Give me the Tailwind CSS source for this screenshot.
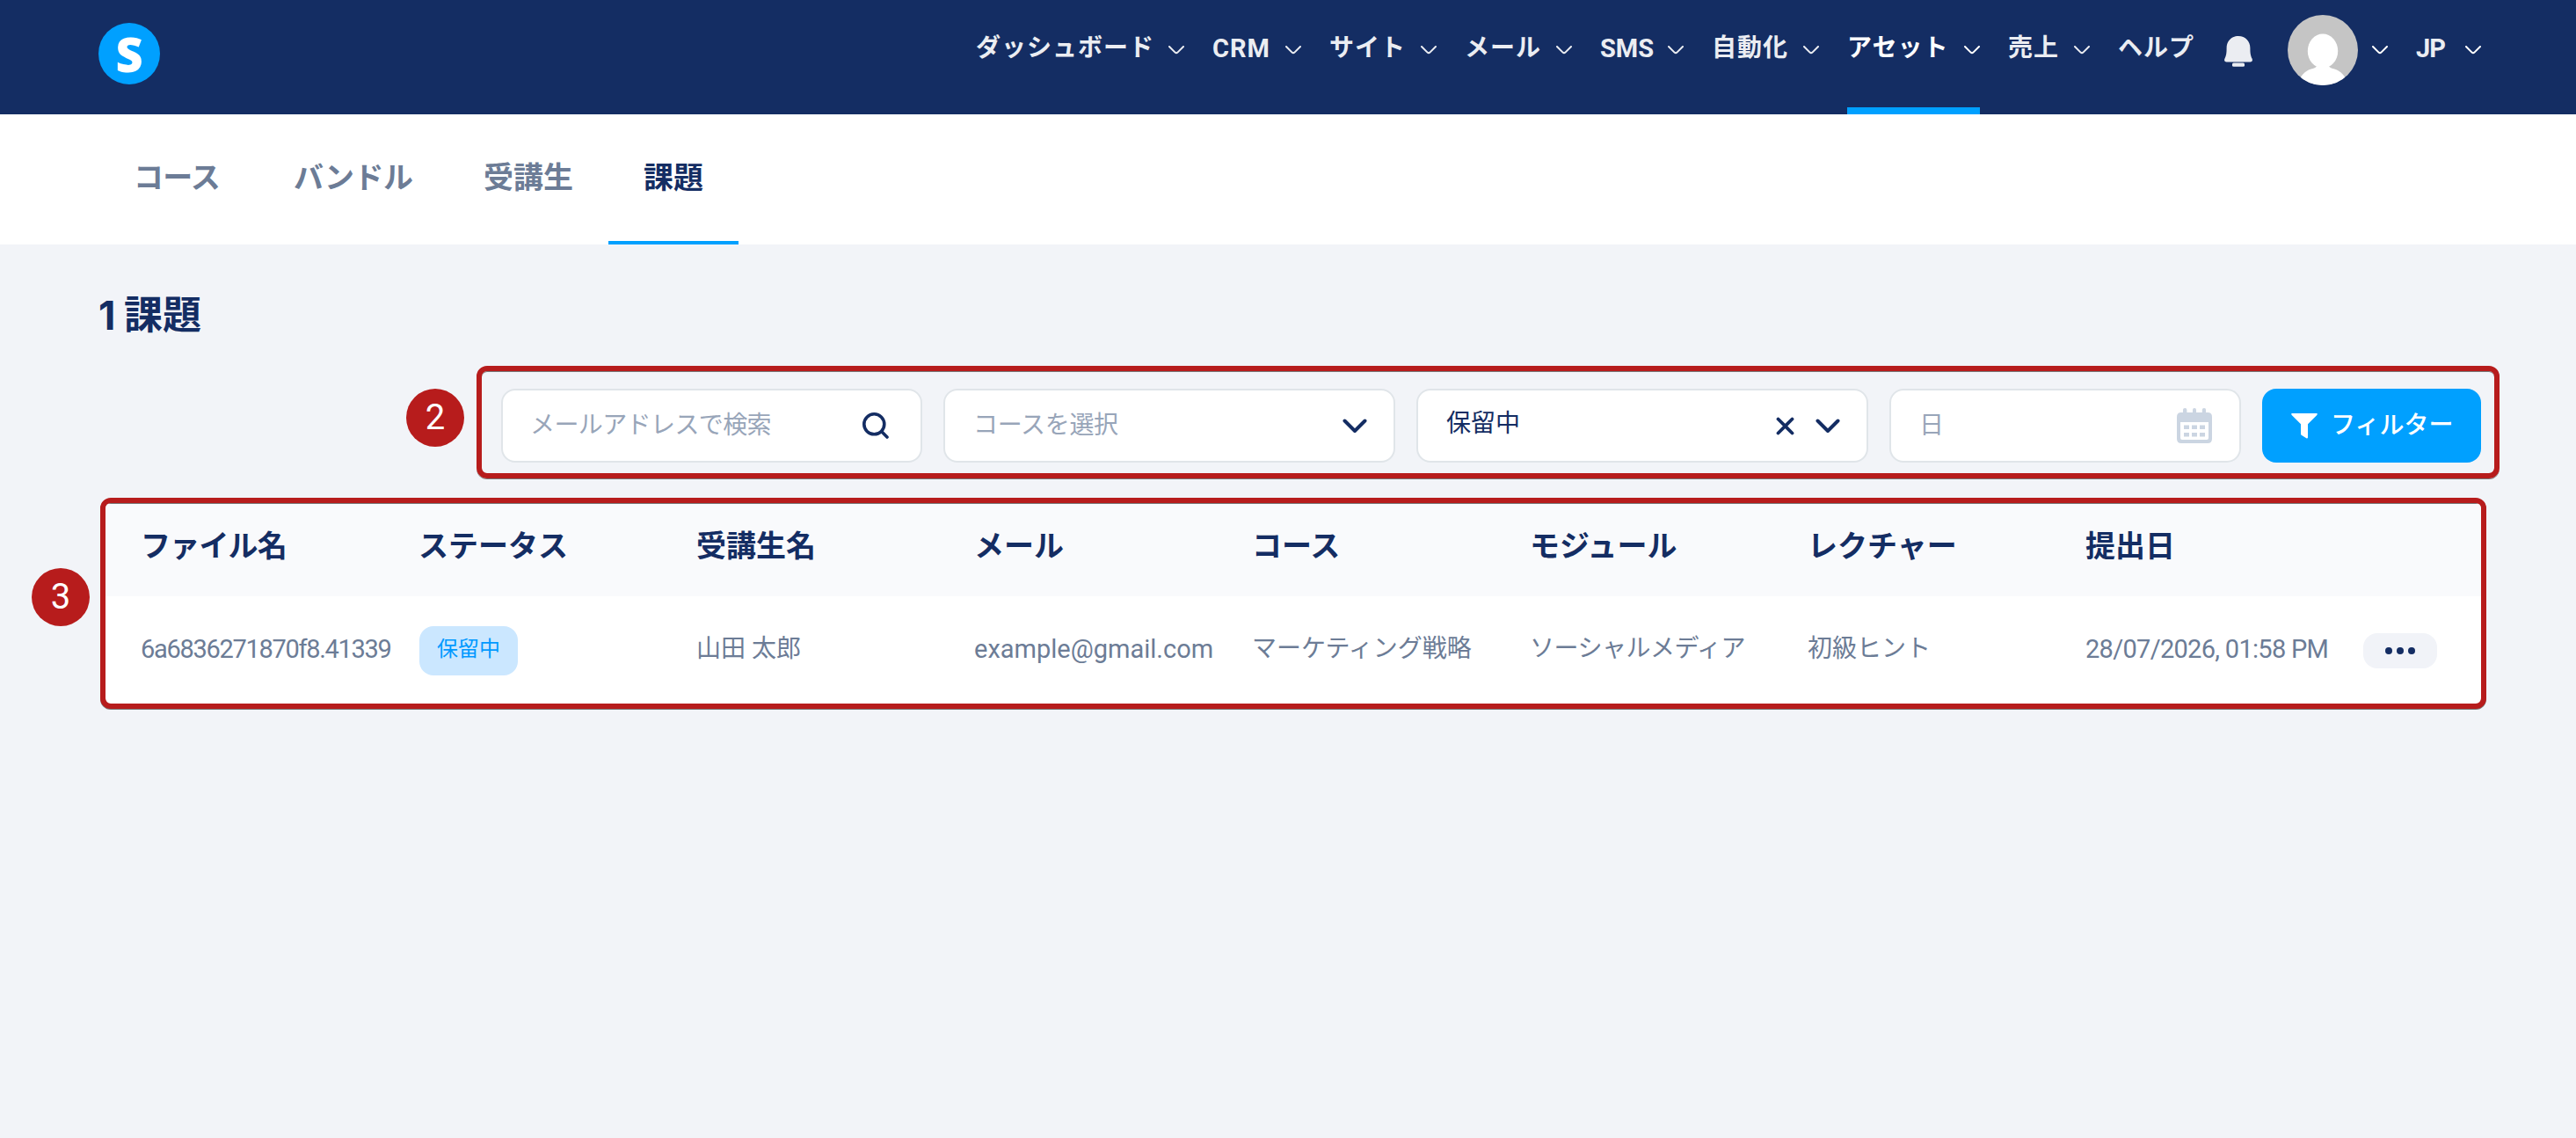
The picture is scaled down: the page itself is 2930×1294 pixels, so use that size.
<!DOCTYPE html>
<html lang="ja">
<head>
    <meta charset="UTF-8">
    <meta name="viewport" content="width=device-width, initial-scale=1.0">
    <title>課題</title>
    <script src="https://cdn.jsdelivr.net/npm/@tailwindcss/browser@4"></script>
</head>
<body class="min-h-screen bg-[#f2f4f8] font-['Roboto','Noto_Sans_CJK_JP',sans-serif] text-[#142d63]">
    <!-- Shared icons -->
    <svg class="hidden">
        <symbol id="chevron" viewBox="0 0 18 10"><path d="M1 1l6.6 6.6q1.4 1.3 2.8 0L17 1" fill="none" stroke="currentColor" stroke-width="2" stroke-linecap="round"/></symbol>
        <symbol id="chevron-bold" viewBox="0 0 28 17"><path d="M2.5 2.5L14 14L25.5 2.5" fill="none" stroke="currentColor" stroke-width="4" stroke-linecap="round" stroke-linejoin="round"/></symbol>
    </svg>

    <!-- Top bar -->
    <header class="flex h-[130px] justify-between bg-[#142d63] pl-28 pr-[108px]">
        <a href="#" class="mt-[26px] flex size-[70px] items-center justify-center rounded-full bg-[#00a0ff]">
            <span class="font-['Open_Sans'] text-[54px] leading-[70px] font-extrabold text-white">S</span>
        </a>
        <nav class="flex text-[28px] font-bold whitespace-nowrap text-[#ebedf2]">
            <div class="flex gap-8 leading-[110px] tracking-[1px]">
                <a href="#" class="flex w-[237px] justify-between">ダッシュボード<svg class="mt-[52px] h-2.5 w-[18px]"><use href="#chevron"/></svg></a>
                <a href="#" class="flex w-[101px] justify-between text-[29px]">CRM<svg class="mt-[52px] h-2.5 w-[18px]"><use href="#chevron"/></svg></a>
                <a href="#" class="flex w-[122px] justify-between">サイト<svg class="mt-[52px] h-2.5 w-[18px]"><use href="#chevron"/></svg></a>
                <a href="#" class="flex w-[122px] justify-between">メール<svg class="mt-[52px] h-2.5 w-[18px]"><use href="#chevron"/></svg></a>
                <a href="#" class="flex w-[95px] justify-between text-[29px] tracking-normal">SMS<svg class="mt-[52px] h-2.5 w-[18px]"><use href="#chevron"/></svg></a>
                <a href="#" class="flex w-[122px] justify-between">自動化<svg class="mt-[52px] h-2.5 w-[18px]"><use href="#chevron"/></svg></a>
                <a href="#" class="flex w-[151px] justify-between border-b-8 border-[#00a0ff] text-white">アセット<svg class="mt-[52px] h-2.5 w-[18px]"><use href="#chevron"/></svg></a>
                <a href="#" class="flex w-[93px] justify-between">売上<svg class="mt-[52px] h-2.5 w-[18px]"><use href="#chevron"/></svg></a>
                <a href="#" class="w-[87px]">ヘルプ</a>
            </div>
            <svg class="mt-[41px] ml-[34px] h-[35px] w-8" viewBox="0 0 32 35" fill="currentColor">
                <path d="M16 0C8 0 2.6 6 2.6 13.500C2.600 20 2 22.500 .5 25.500C-.6 28 .5 29.500 2.500 29.500H29.500C31.500 29.500 32.600 28 31.500 25.500C30 22.500 29.400 20 29.400 13.500C29.400 6 24 0 16 0Z"/>
                <rect x="9" y="30.600" width="14" height="4.200" rx="1.500"/>
            </svg>
            <svg class="mt-[17px] ml-10 size-20 rounded-full bg-[#c5c5c5]" viewBox="0 0 80 80" fill="#fff">
                <ellipse cx="40" cy="41" rx="17.200" ry="19.500"/>
                <path d="M33 56V58.500C31 61 27 61 23 63C18 65.500 15 70 13 74V80H67V74C65 70 62 65.500 57 63C53 61 49 61 47 58.500V56Z"/>
            </svg>
            <svg class="mt-[52px] ml-4 h-2.5 w-[18px] text-white"><use href="#chevron"/></svg>
            <a href="#" class="ml-8 flex w-[74px] justify-between text-[29px] leading-[110px] tracking-[-1px]">JP<svg class="mt-[52px] h-2.5 w-[18px] text-white"><use href="#chevron"/></svg></a>
        </nav>
    </header>

    <!-- Sub navigation -->
    <nav class="flex h-[148px] bg-white pl-28 text-[34px] leading-[144px] font-bold text-[#6c7c96]">
        <a href="#" class="w-[182px] pl-10 tracking-[-0.8px]">コース</a>
        <a href="#" class="w-[216px] pl-10 tracking-[-0.6px]">バンドル</a>
        <a href="#" class="w-[182px] pl-10">受講生</a>
        <a href="#" class="border-b-4 border-[#00a0ff] px-10 text-[#142d63]">課題</a>
    </nav>

    <main>
        <h1 class="flex pt-12 pl-28 text-[44px] leading-[66px] font-bold"><span class="w-[29px] font-['Inter'] text-[45px]">1</span><span>課題</span></h1>

        <!-- Filters -->
        <div class="mt-6 ml-[462px] flex items-start">
            <span class="mt-[26px] flex size-[66px] items-center justify-center rounded-full bg-[#b71c1c] text-[40px] leading-none text-white">2</span>
            <form class="ml-3.5 flex h-32 w-[2301px] gap-6 rounded-xl border-6 border-[#b71c1c] pt-5 pl-[22px] text-[28px] shadow-[0_1px_0_#777,inset_0_1px_0_#777]">
                <div class="flex h-[84px] w-[479px] shrink-0 items-center justify-between rounded-2xl border-2 border-[#e0e5e9] bg-white pr-9 pl-[31px] text-[#98a5b9]">
                    <span class="-mt-px tracking-[-0.6px]">メールアドレスで検索</span>
                    <svg class="size-[30px] text-[#142d63]" viewBox="0 0 30 30" fill="none" stroke="currentColor" stroke-width="3.6" stroke-linecap="round"><circle cx="13.300" cy="13.300" r="11.500"/><path d="M21.800 21.800L28 28"/></svg>
                </div>
                <div class="flex h-[84px] w-[514px] shrink-0 items-center justify-between rounded-2xl border-2 border-[#e0e5e9] bg-white pr-[30px] pl-8 text-[#98a5b9]">
                    <span class="-mt-px tracking-[-0.3px]">コースを選択</span>
                    <svg class="h-[17px] w-7 text-[#142d63]"><use href="#chevron-bold"/></svg>
                </div>
                <div class="flex h-[84px] w-[514px] shrink-0 items-center rounded-2xl border-2 border-[#e0e5e9] bg-white pr-[30px] pl-8">
                    <span class="-mt-1 flex-1">保留中</span>
                    <svg class="mr-6 size-[21px]" viewBox="0 0 21 21" fill="none" stroke="currentColor" stroke-width="3.8" stroke-linecap="round"><path d="M2.500 2.500L18.500 18.500M18.500 2.500L2.500 18.500"/></svg>
                    <svg class="h-[17px] w-7"><use href="#chevron-bold"/></svg>
                </div>
                <div class="flex h-[84px] w-[400px] shrink-0 items-center justify-between rounded-2xl border-2 border-[#e0e5e9] bg-white pr-[31px] pl-8 text-[#98a5b9]">
                    <span class="-mt-px">日</span>
                    <svg class="size-10 text-[#cbd5e2]" viewBox="0 0 40 40" fill="currentColor">
                        <path fill-rule="evenodd" d="M5 5H7V2Q7 0 9.200 0T11.400 2V5H18V2Q18 0 20 0T22 2V5H28.800V2Q28.800 0 31 0T33 2V5H35Q40 5 40 10V35Q40 40 35 40H5Q0 40 0 35V10Q0 5 5 5ZM4 16V34Q4 36 6 36H34Q36 36 36 34V16Z"/>
                        <path d="M8 19.500h6v4.500H8zM17 19.500h6v4.500h-6zM26 19.500h6v4.500h-6zM8 28h6v4.500H8zM17 28h6v4.500h-6zM26 28h6v4.500h-6z"/>
                    </svg>
                </div>
                <button type="button" class="flex h-[84px] w-[249px] shrink-0 items-center rounded-2xl bg-[#00a0ff] pl-[33px] font-medium text-white">
                    <svg class="mr-[15px] h-[30px] w-[30px]" viewBox="0 0 30 30" fill="currentColor"><path d="M1 1H29Q30.500 1.500 29.300 3L19 13.300V28.500Q18.600 30 17.300 29.300L11.700 25.700Q11 25.200 11 24.500V13.300L.7 3Q-.5 1.500 1 1Z"/></svg>
                    <span class="-mt-px">フィルター</span>
                </button>
            </form>
        </div>

        <!-- Assignments table -->
        <div class="mt-[22px] ml-9 flex items-start">
            <span class="mt-20 flex size-[66px] items-center justify-center rounded-full bg-[#b71c1c] text-[40px] leading-none text-white">3</span>
            <div class="ml-3 h-60 w-[2714px] overflow-hidden rounded-xl border-6 border-[#b71c1c] bg-white whitespace-nowrap shadow-[0_1px_0_#777,inset_0_1px_0_#777]">
                <div class="mt-px grid h-[105px] grid-cols-[repeat(7,316px)_1fr] bg-[#f9fafc] pl-10 text-[34px] leading-[97px] font-bold">
                    <span class="tracking-[-0.8px]">ファイル名</span>
                    <span>ステータス</span>
                    <span>受講生名</span>
                    <span>メール</span>
                    <span>コース</span>
                    <span>モジュール</span>
                    <span>レクチャー</span>
                    <span>提出日</span>
                </div>
                <div class="grid h-[122px] grid-cols-[repeat(7,316px)_316px_1fr] pl-10 text-[28px] leading-[120px] text-[#6c7c96]">
                    <span class="text-[29px] tracking-[-1.3px]">6a6836271870f8.41339</span>
                    <span class="mt-[34px] ml-px h-14 w-[112px] rounded-2xl bg-[#cbe7ff] text-center text-2xl leading-[52px] text-[#0099ff]">保留中</span>
                    <span>山田 太郎</span>
                    <span class="text-[29px]">example@gmail.com</span>
                    <span>マーケティング戦略</span>
                    <span class="tracking-[-0.5px]">ソーシャルメディア</span>
                    <span>初級ヒント</span>
                    <span class="text-[29px] tracking-[-0.7px]">28/07/2026, 01:58 PM</span>
                    <button type="button" class="mt-[42px] flex h-10 w-[84px] items-center justify-center gap-[5px] rounded-2xl bg-[#f1f3f8]">
                        <i class="size-2 rounded-full bg-[#142d63]"></i>
                        <i class="size-2 rounded-full bg-[#142d63]"></i>
                        <i class="size-2 rounded-full bg-[#142d63]"></i>
                    </button>
                </div>
            </div>
        </div>
    </main>
</body>
</html>
